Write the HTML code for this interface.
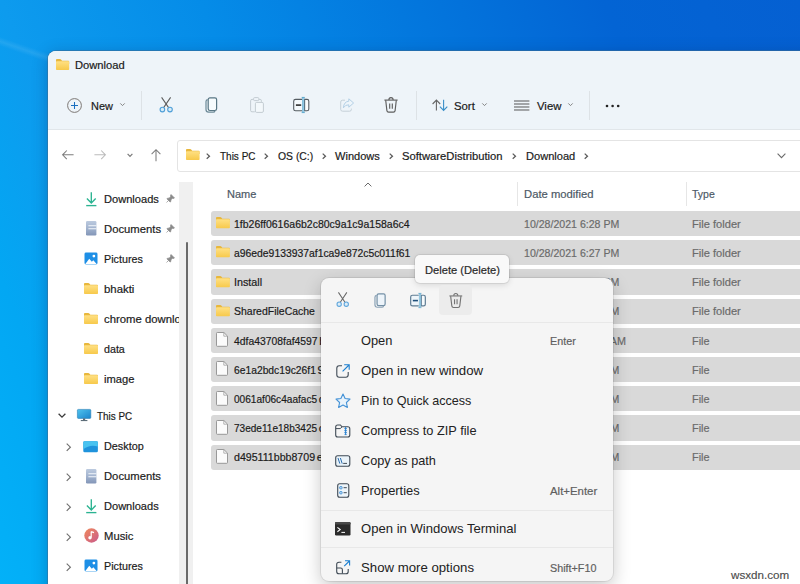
<!DOCTYPE html>
<html lang="en">
<head>
<meta charset="utf-8">
<title>Download - File Explorer</title>
<style>
*{box-sizing:border-box;margin:0;padding:0}
html,body{width:800px;height:584px;overflow:hidden}
body{position:relative;font-family:"Liberation Sans",sans-serif;font-size:11.5px;color:#1b1b1b;-webkit-text-stroke:0.2px currentColor;
 background:linear-gradient(68deg,#03b1f8 0%,#03a7f3 12%,#0d9bee 22.8%,#058ce8 42%,#0378de 61%,#0364d4 81%,#0560d2 100%);
}
.t{position:absolute;white-space:nowrap;line-height:16px;height:16px;transform-origin:0 50%}
#win{position:absolute;left:48px;top:51px;width:800px;height:600px;background:#fff;border-top-left-radius:8px;
 box-shadow:0 0 0 1px rgba(60,110,150,0.55),0 3px 16px rgba(0,30,80,0.30);overflow:hidden}
#chrome{position:absolute;left:0;top:0;width:800px;height:79px;background:#eef4f9;border-bottom:1px solid #e1e6ea}
.vsep{position:absolute;width:1px;background:#dde2e6}
svg{position:absolute;overflow:visible}
.row{position:absolute;left:211px;width:700px;height:25.3px;background:#d9d9d9;border-radius:3px}
.g{color:#6b6b6b}
#menu{position:absolute;left:320.5px;top:278px;width:292.5px;height:302.5px;background:#f5f5f5;border-radius:8px;
 box-shadow:0 0 0 1px rgba(0,0,0,0.07),0 6px 18px rgba(0,0,0,0.22)}
#tip{position:absolute;left:415px;top:255px;width:94px;height:28px;background:#f9f9f9;border-radius:5px;
 box-shadow:0 0 0 1px rgba(0,0,0,0.07),0 2px 6px rgba(0,0,0,0.12)}
.msep{position:absolute;left:321px;width:292px;height:1px;background:#e8e8e8}
.mi{font-size:13px;color:#222;-webkit-text-stroke:0}
.sc{font-size:11.4px;color:#5f5f5f}
.sb{font-size:11.5px}
</style>
</head>
<body>
<svg width="0" height="0" style="position:absolute">
 <defs>
  <linearGradient id="fg" x1="0" y1="0" x2="0" y2="1"><stop offset="0" stop-color="#ffe083"/><stop offset="1" stop-color="#f7c94b"/></linearGradient>
  <symbol id="folder" viewBox="0 0 14 11" preserveAspectRatio="none" overflow="visible">
   <path d="M0 0.9 Q0 0 0.9 0 H4.3 Q4.9 0 5.3 0.5 L6.4 1.8 H13.1 Q14 1.8 14 2.7 V5 H0 Z" fill="#e8b73c"/>
   <rect x="0" y="2.3" width="14" height="8.7" rx="0.8" fill="url(#fg)"/>
  </symbol>
  <symbol id="file" viewBox="0 0 12 14.8" preserveAspectRatio="none" overflow="visible">
   <path d="M1.3 0.5 H7.9 L11.5 4.1 V13.5 Q11.5 14.3 10.7 14.3 H1.3 Q0.5 14.3 0.5 13.5 V1.3 Q0.5 0.5 1.3 0.5 Z" fill="#fbfbfb" stroke="#8e8e8e" stroke-width="0.9"/>
   <path d="M7.8 0.7 V4.2 H11.3" fill="none" stroke="#a2a2a2" stroke-width="0.8"/>
  </symbol>
  <symbol id="chev" viewBox="0 0 6 8" overflow="visible"><path d="M1.2 0.8 L4.6 4 L1.2 7.2" fill="none" stroke="#555" stroke-width="1.3"/></symbol>
  <symbol id="chevd" viewBox="0 0 5 3" overflow="visible"><path d="M0.3 0.4 L2.5 2.6 L4.7 0.4" fill="none" stroke="#777" stroke-width="0.9"/></symbol>
  <symbol id="pin" viewBox="0 0 10 10" overflow="visible"><path d="M5.6 0.6 L9.4 4.4 L8.4 5 L7 4.8 L5.4 6.6 L5.4 8.2 L4.6 9 L1 5.4 L1.8 4.6 L3.4 4.6 L5.2 3 L5 1.6 Z M2.8 7.2 L0.6 9.4" fill="#8a8a8a" stroke="#8a8a8a" stroke-width="0.8"/></symbol>
  <linearGradient id="dg" x1="0" y1="0" x2="0" y2="1"><stop offset="0" stop-color="#bccadf"/><stop offset="0.5" stop-color="#a3b4cf"/><stop offset="1" stop-color="#8396b8"/></linearGradient>
  <symbol id="dl" viewBox="0 0 11 14.5" overflow="visible"><path d="M5.3 0.2 V10.4 M0.9 6.6 L5.3 11 L9.7 6.6" fill="none" stroke="#2bb391" stroke-width="1.35"/><path d="M0.2 13.6 H10.4" stroke="#2bb391" stroke-width="1.35"/></symbol>
  <symbol id="doc" viewBox="0 0 10.4 14.4" overflow="visible"><rect x="0" y="0" width="10.4" height="14.4" rx="1.2" fill="url(#dg)"/><path d="M2.4 4.8 H10.4 M2.4 7.8 H10.4" stroke="#f4f7fb" stroke-width="1.1"/></symbol>
  <symbol id="pic" viewBox="0 0 15 14" overflow="visible"><rect x="0.5" y="0.5" width="14" height="13" rx="1.6" fill="#1e8fe6"/><path d="M1.2 13.2 L5.6 7.2 L8.4 10.6 L10 9 L13.8 13.2 Z" fill="#fff"/><circle cx="10.6" cy="4.4" r="1.5" fill="#fff"/></symbol>
 </defs>
</svg>
<div style="position:absolute;left:-20px;top:30px;width:90px;height:9px;transform:rotate(19deg);transform-origin:0 50%;background:linear-gradient(180deg,rgba(255,255,255,0),rgba(255,255,255,0.09),rgba(255,255,255,0))"></div>
<div id="win"><div id="chrome"></div></div>

<svg style="left:56px;top:59.1px" width="13.2" height="11" ><use href="#folder" width="13.2" height="11"/></svg>
<div class="t " style="left:74.8px;top:56.9px;transform:scaleX(0.9715);">Download</div>
<svg style="left:66px;top:97px" width="17" height="17" viewBox="0 0 17 17"><circle cx="8.5" cy="8.5" r="6.9" fill="none" stroke="#7d7875" stroke-width="1"/><path d="M8.5 5 V12 M5 8.5 H12" stroke="#1a6fc0" stroke-width="1.05"/></svg>
<div class="t " style="left:90.7px;top:97.8px;transform:scaleX(0.9515);">New</div>
<svg style="left:119.6px;top:103.4px" width="5" height="3" ><use href="#chevd" width="5" height="3"/></svg>
<div class="vsep" style="left:141px;top:91px;height:29px"></div>
<svg style="left:159px;top:97px" width="15" height="15.5" viewBox="0 0 15 15.5"><path d="M2.6 0.4 L9.6 10.6 M11.6 0.4 L4.6 10.6" fill="none" stroke="#5c5c5c" stroke-width="1.05"/><circle cx="3.4" cy="12.6" r="2.3" fill="#d8ecf8" stroke="#4f9fd8" stroke-width="1.1"/><circle cx="11" cy="12.6" r="2.3" fill="#d8ecf8" stroke="#4f9fd8" stroke-width="1.1"/></svg>
<svg style="left:205px;top:96.7px" width="12.5" height="16" viewBox="0 0 12.5 16"><path d="M2.6 2.6 Q1 2.8 1 4.6 V12.6 Q1 15.2 3.6 15.2 H8.2 Q9.6 15.2 10 14" fill="none" stroke="#6d8a98" stroke-width="1.2"/><rect x="3.2" y="0.9" width="8.4" height="12.6" rx="1.7" fill="#f6fbfd" stroke="#587684" stroke-width="1.2"/></svg>
<svg style="left:249.5px;top:96.7px" width="14" height="16" viewBox="0 0 14 16"><path d="M3.6 2.4 H2 Q0.6 2.4 0.6 3.8 V13.4 Q0.6 14.8 2 14.8 H4.8" fill="none" stroke="#c3ccd2" stroke-width="1"/><path d="M8.8 2.4 H10.2 Q11.4 2.4 11.4 3.8 V4.8" fill="none" stroke="#c3ccd2" stroke-width="1"/><rect x="3.6" y="0.6" width="5.2" height="3" rx="1" fill="none" stroke="#c3ccd2" stroke-width="1"/><rect x="5.4" y="5.4" width="8" height="10" rx="1.3" fill="#f3f8fb" stroke="#c3ccd2" stroke-width="1"/></svg>
<svg style="left:293.3px;top:96.7px" width="16.5" height="16" viewBox="0 0 16.5 16"><path d="M9 2.4 H2.6 Q0.7 2.4 0.7 4.2 V12 Q0.7 13.8 2.6 13.8 H9" fill="#f4f9fc" stroke="#555c62" stroke-width="1.1"/><path d="M11.6 2.4 H14 Q15.8 2.4 15.8 4.2 V12 Q15.8 13.8 14 13.8 H11.6 Z" fill="#fbfdfe" stroke="#555c62" stroke-width="1.1"/><path d="M2.9 8.1 H8.2" stroke="#2b2b2b" stroke-width="1.6"/><rect x="9.5" y="0.4" width="1.5" height="15.2" fill="#a9d9ee" stroke="#5aa6cc" stroke-width="0.6"/><path d="M8.6 0.4 H11.9 M8.6 15.6 H11.9" stroke="#5aa6cc" stroke-width="0.8" fill="none"/></svg>
<svg style="left:340px;top:98px" width="14.5" height="14" viewBox="0 0 14.5 14"><path d="M5 2.2 H2.6 Q0.7 2.2 0.7 4 V11.4 Q0.7 13.2 2.6 13.2 H9.6 Q11.4 13.2 11.4 11.4 V10.6" fill="none" stroke="#c5d0d8" stroke-width="1"/><path d="M8.8 0.8 L13.6 5 L8.8 9.2 V6.8 Q5.4 6.6 3.4 9.8 Q3.8 3.8 8.8 3.2 Z" fill="#eef5fa" stroke="#b4d0e6" stroke-width="1" stroke-linejoin="round"/></svg>
<svg style="left:384.4px;top:96.8px" width="14" height="15.8" viewBox="0 0 14 15.8"><path d="M0.4 3.1 H13.6" stroke="#5e5e5e" stroke-width="1.15"/><path d="M4.9 2.9 Q4.9 0.6 7 0.6 Q9.1 0.6 9.1 2.9" fill="none" stroke="#5e5e5e" stroke-width="1.1"/><path d="M1.7 3.3 L2.9 13.6 Q3.1 15.2 4.6 15.2 H9.4 Q10.9 15.2 11.1 13.6 L12.3 3.3" fill="none" stroke="#5e5e5e" stroke-width="1.15"/><path d="M5.7 6.6 V11.8 M8.3 6.6 V11.8" stroke="#5e5e5e" stroke-width="1.15"/></svg>
<div class="vsep" style="left:416px;top:91px;height:29px"></div>
<svg style="left:431.6px;top:98.8px" width="16" height="12.4" viewBox="0 0 16 12.4"><path d="M4.4 11.4 V1.2 M0.6 5 L4.4 1.1 L8.2 5" fill="none" stroke="#666" stroke-width="1.1"/><path d="M11.6 0.8 V11.4 M7.9 7.6 L11.6 11.5 L15.3 7.6" fill="none" stroke="#3a8fc8" stroke-width="1.1"/></svg>
<div class="t " style="left:454.4px;top:97.8px;transform:scaleX(0.9861);">Sort</div>
<svg style="left:482.2px;top:103.4px" width="5" height="3" ><use href="#chevd" width="5" height="3"/></svg>
<svg style="left:514.3px;top:99.5px" width="15.4" height="11" viewBox="0 0 15.4 11"><path d="M0 1 H15.4 M0 4 H15.4 M0 7 H15.4 M0 10 H15.4" stroke="#555" stroke-width="1"/></svg>
<div class="t " style="left:537.4px;top:97.8px;transform:scaleX(0.9871);">View</div>
<svg style="left:567.5px;top:103.4px" width="5" height="3" ><use href="#chevd" width="5" height="3"/></svg>
<div class="vsep" style="left:589px;top:91px;height:29px"></div>
<svg style="left:605px;top:103.5px" width="15.2" height="4" viewBox="0 0 15.2 4"><circle cx="2" cy="2" r="1.3" fill="#222"/><circle cx="7.6" cy="2" r="1.3" fill="#222"/><circle cx="13.2" cy="2" r="1.3" fill="#222"/></svg>
<svg style="left:61.6px;top:150.3px" width="12" height="9.6" viewBox="0 0 12 9.6"><path d="M11.6 4.8 H0.8 M4.8 0.5 L0.6 4.8 L4.8 9.1" fill="none" stroke="#7d7d7d" stroke-width="1.05"/></svg>
<svg style="left:94.4px;top:150.3px" width="12" height="9.6" viewBox="0 0 12 9.6"><path d="M0.4 4.8 H11.2 M7.2 0.5 L11.4 4.8 L7.2 9.1" fill="none" stroke="#bcbcbc" stroke-width="1.05"/></svg>
<svg style="left:127px;top:153px" width="6" height="4.5" viewBox="0 0 6 4.5"><path d="M0.6 0.8 L3 3.4 L5.4 0.8" fill="none" stroke="#7a7a7a" stroke-width="1.2"/></svg>
<svg style="left:151.2px;top:149.2px" width="10" height="12.4" viewBox="0 0 10 12.4"><path d="M5 12.2 V0.8 M0.6 5.2 L5 0.7 L9.4 5.2" fill="none" stroke="#7d7d7d" stroke-width="1.05"/></svg>
<div style="position:absolute;left:176.5px;top:140px;width:640px;height:32px;border:1px solid #e4e4e4;border-radius:3px;background:#fff"></div>
<svg style="left:185.8px;top:149.3px" width="13.6" height="11" ><use href="#folder" width="13.6" height="11"/></svg>
<svg style="left:206.3px;top:153.0px" width="4.4" height="6.4" viewBox="0 0 4.4 6.4"><path d="M0.7 0.6 L3.5 3.2 L0.7 5.8" fill="none" stroke="#5a5a5a" stroke-width="1.25"/></svg>
<svg style="left:264.3px;top:153.0px" width="4.4" height="6.4" viewBox="0 0 4.4 6.4"><path d="M0.7 0.6 L3.5 3.2 L0.7 5.8" fill="none" stroke="#5a5a5a" stroke-width="1.25"/></svg>
<svg style="left:322px;top:153.0px" width="4.4" height="6.4" viewBox="0 0 4.4 6.4"><path d="M0.7 0.6 L3.5 3.2 L0.7 5.8" fill="none" stroke="#5a5a5a" stroke-width="1.25"/></svg>
<svg style="left:389px;top:153.0px" width="4.4" height="6.4" viewBox="0 0 4.4 6.4"><path d="M0.7 0.6 L3.5 3.2 L0.7 5.8" fill="none" stroke="#5a5a5a" stroke-width="1.25"/></svg>
<svg style="left:511.70000000000005px;top:153.0px" width="4.4" height="6.4" viewBox="0 0 4.4 6.4"><path d="M0.7 0.6 L3.5 3.2 L0.7 5.8" fill="none" stroke="#5a5a5a" stroke-width="1.25"/></svg>
<svg style="left:583.8px;top:153.0px" width="4.4" height="6.4" viewBox="0 0 4.4 6.4"><path d="M0.7 0.6 L3.5 3.2 L0.7 5.8" fill="none" stroke="#5a5a5a" stroke-width="1.25"/></svg>
<div class="t " style="left:220.3px;top:147.8px;transform:scaleX(0.8678);">This PC</div>
<div class="t " style="left:277.8px;top:147.8px;transform:scaleX(0.9029);">OS (C:)</div>
<div class="t " style="left:334.5px;top:147.8px;transform:scaleX(0.9624);">Windows</div>
<div class="t " style="left:402.4px;top:147.8px;transform:scaleX(0.9766);">SoftwareDistribution</div>
<div class="t " style="left:525.8px;top:147.8px;transform:scaleX(0.9637);">Download</div>
<svg style="left:776.5px;top:152.5px" width="9" height="5.5" viewBox="0 0 9 5.5"><path d="M0.6 0.7 L4.5 4.6 L8.4 0.7" fill="none" stroke="#6a6a6a" stroke-width="1.1"/></svg>
<div style="position:absolute;left:179px;top:182px;width:14px;height:410px;background:#f0f0f0"></div>
<div style="position:absolute;left:186px;top:242px;width:2px;height:350px;background:#6a6a6a;border-radius:1px"></div>
<div style="position:absolute;left:48px;top:182px;width:131.5px;height:410px;overflow:hidden">
</div>
<svg style="left:85.5px;top:191.6px" width="11" height="14.5" ><use href="#dl" width="11" height="14.5"/></svg>
<div class="t sb" style="left:103.6px;top:190.9px;transform:scaleX(0.9647);">Downloads</div>
<svg style="left:166px;top:194.0px" width="9" height="9" ><use href="#pin" width="9" height="9"/></svg>
<svg style="left:85.6px;top:221.3px" width="10.4" height="14.4" ><use href="#doc" width="10.4" height="14.4"/></svg>
<div class="t sb" style="left:103.6px;top:220.9px;transform:scaleX(0.9816);">Documents</div>
<svg style="left:166px;top:224.0px" width="9" height="9" ><use href="#pin" width="9" height="9"/></svg>
<svg style="left:84px;top:251.89999999999998px" width="14" height="13" ><use href="#pic" width="14" height="13"/></svg>
<div class="t sb" style="left:103.6px;top:250.8px;transform:scaleX(0.9339);">Pictures</div>
<svg style="left:166px;top:253.89999999999998px" width="9" height="9" ><use href="#pin" width="9" height="9"/></svg>
<svg style="left:84px;top:283.0px" width="14" height="11" ><use href="#folder" width="14" height="11"/></svg>
<div class="t sb" style="left:103.6px;top:280.9px;transform:scaleX(0.9906);">bhakti</div>
<svg style="left:84px;top:313.1px" width="14" height="11" ><use href="#folder" width="14" height="11"/></svg>
<div style="position:absolute;left:103.6px;top:310.6px;width:75px;height:16px;overflow:hidden">
<div class="t sb" style="left:0px;top:0.4px;transform:scaleX(0.9841);">chrome downloads</div>
</div>
<svg style="left:84px;top:343.1px" width="14" height="11" ><use href="#folder" width="14" height="11"/></svg>
<div class="t sb" style="left:103.6px;top:341.0px;transform:scaleX(0.9290);">data</div>
<svg style="left:84px;top:373.1px" width="14" height="11" ><use href="#folder" width="14" height="11"/></svg>
<div class="t sb" style="left:103.6px;top:371.0px;transform:scaleX(0.9704);">image</div>
<svg style="left:58px;top:413.4px" width="8" height="5.2" viewBox="0 0 8 5.2"><path d="M0.6 0.7 L4 4.1 L7.4 0.7" fill="none" stroke="#3c3c3c" stroke-width="1.3"/></svg>
<svg style="left:76.6px;top:409.4px" width="14.2" height="12.6" viewBox="0 0 14.2 12.6"><defs><linearGradient id="mon" x1="0" y1="0" x2="1" y2="1"><stop offset="0" stop-color="#4fc3ee"/><stop offset="1" stop-color="#1a84cc"/></linearGradient></defs><rect x="0.4" y="0.4" width="13.4" height="9" rx="0.9" fill="url(#mon)" stroke="#2a7fb5" stroke-width="0.6"/><rect x="6" y="9.4" width="2.2" height="1.8" fill="#5d6d79"/><rect x="3.8" y="11" width="6.6" height="1.1" fill="#5d6d79"/></svg>
<div class="t sb" style="left:96.8px;top:407.9px;transform:scaleX(0.8605);">This PC</div>
<svg style="left:66.4px;top:442.7px" width="5.4" height="8.4" viewBox="0 0 5.4 8.4"><path d="M0.7 0.6 L4.4 4.2 L0.7 7.8" fill="none" stroke="#6f6f6f" stroke-width="1.15"/></svg>
<svg style="left:83.3px;top:440.5px" width="15.2" height="11.6" viewBox="0 0 15 12.5" preserveAspectRatio="none"><rect x="0.3" y="0.3" width="14.4" height="11.9" rx="1.3" fill="#1f93dc"/><path d="M0.3 1.6 Q0.3 0.3 1.6 0.3 H13.4 Q14.7 0.3 14.7 1.6 V6 Q7 3 0.3 9 Z" fill="#49c3f0"/></svg>
<div class="t sb" style="left:103.6px;top:438.3px;transform:scaleX(0.9434);">Desktop</div>
<svg style="left:66.4px;top:472.7px" width="5.4" height="8.4" viewBox="0 0 5.4 8.4"><path d="M0.7 0.6 L4.4 4.2 L0.7 7.8" fill="none" stroke="#6f6f6f" stroke-width="1.15"/></svg>
<svg style="left:85.6px;top:468.7px" width="10.4" height="14.4" ><use href="#doc" width="10.4" height="14.4"/></svg>
<div class="t sb" style="left:103.6px;top:468.3px;transform:scaleX(0.9781);">Documents</div>
<svg style="left:66.4px;top:502.7px" width="5.4" height="8.4" viewBox="0 0 5.4 8.4"><path d="M0.7 0.6 L4.4 4.2 L0.7 7.8" fill="none" stroke="#6f6f6f" stroke-width="1.15"/></svg>
<svg style="left:85.5px;top:499.0px" width="11" height="14.5" ><use href="#dl" width="11" height="14.5"/></svg>
<div class="t sb" style="left:103.6px;top:498.3px;transform:scaleX(0.9612);">Downloads</div>
<svg style="left:66.4px;top:532.6999999999999px" width="5.4" height="8.4" viewBox="0 0 5.4 8.4"><path d="M0.7 0.6 L4.4 4.2 L0.7 7.8" fill="none" stroke="#6f6f6f" stroke-width="1.15"/></svg>
<svg style="left:83.5px;top:528.4px" width="15" height="15" viewBox="0 0 15 15"><defs><linearGradient id="mg" x1="0" y1="0" x2="1" y2="1"><stop offset="0" stop-color="#f08a5b"/><stop offset="1" stop-color="#c95a8c"/></linearGradient></defs><circle cx="7.5" cy="7.5" r="7.2" fill="url(#mg)"/><path d="M7.2 3.4 V9.6 M7.2 3.6 L10 4.6" stroke="#fff" stroke-width="1.2" fill="none"/><circle cx="6" cy="9.8" r="1.7" fill="#fff"/></svg>
<div class="t sb" style="left:103.6px;top:528.3px;transform:scaleX(0.9790);">Music</div>
<svg style="left:66.4px;top:562.6999999999999px" width="5.4" height="8.4" viewBox="0 0 5.4 8.4"><path d="M0.7 0.6 L4.4 4.2 L0.7 7.8" fill="none" stroke="#6f6f6f" stroke-width="1.15"/></svg>
<svg style="left:84px;top:559.4px" width="14" height="13" ><use href="#pic" width="14" height="13"/></svg>
<div class="t sb" style="left:103.6px;top:558.3px;transform:scaleX(0.9339);">Pictures</div>
<div class="vsep" style="left:517px;top:182px;height:24px;background:#e6e6e6"></div>
<div class="vsep" style="left:686px;top:182px;height:24px;background:#e6e6e6"></div>
<svg style="left:364px;top:181.5px" width="8" height="5" viewBox="0 0 8 5"><path d="M0.6 4.4 L4 1 L7.4 4.4" fill="none" stroke="#6a6a6a" stroke-width="1"/></svg>
<div class="t " style="left:227px;top:186.4px;transform:scaleX(0.9580);color:#4d5966">Name</div>
<div class="t " style="left:523.5px;top:186.4px;transform:scaleX(0.9793);color:#4d5966">Date modified</div>
<div class="t " style="left:692px;top:186.4px;transform:scaleX(0.9143);color:#4d5966">Type</div>
<div class="row" style="top:211.0px"></div>
<svg style="left:215.6px;top:217.10000000000002px" width="13.9" height="11.3" ><use href="#folder" width="13.9" height="11.3"/></svg>
<div class="t " style="left:234.4px;top:215.7px;transform:scaleX(0.9132);">1fb26ff0616a6b2c80c9a1c9a158a6c4</div>
<div class="t g" style="left:523.6px;top:215.7px;transform:scaleX(0.9199);">10/28/2021 6:28 PM</div>
<div class="t g" style="left:692px;top:215.7px;transform:scaleX(0.9663);">File folder</div>
<div class="row" style="top:240.2px"></div>
<svg style="left:215.6px;top:246.3px" width="13.9" height="11.3" ><use href="#folder" width="13.9" height="11.3"/></svg>
<div class="t " style="left:234.4px;top:244.9px;transform:scaleX(0.9019);">a96ede9133937af1ca9e872c5c011f61</div>
<div class="t g" style="left:523.6px;top:244.9px;transform:scaleX(0.9199);">10/28/2021 6:27 PM</div>
<div class="t g" style="left:692px;top:244.9px;transform:scaleX(0.9663);">File folder</div>
<div class="row" style="top:269.4px"></div>
<svg style="left:215.6px;top:275.5px" width="13.9" height="11.3" ><use href="#folder" width="13.9" height="11.3"/></svg>
<div class="t " style="left:234.4px;top:274.1px;transform:scaleX(0.9352);">Install</div>
<div class="t g" style="left:523.6px;top:274.1px;transform:scaleX(0.9199);">10/28/2021 6:27 PM</div>
<div class="t g" style="left:692px;top:274.1px;transform:scaleX(0.9663);">File folder</div>
<div class="row" style="top:298.6px"></div>
<svg style="left:215.6px;top:304.70000000000005px" width="13.9" height="11.3" ><use href="#folder" width="13.9" height="11.3"/></svg>
<div class="t " style="left:234.4px;top:303.3px;transform:scaleX(0.9104);">SharedFileCache</div>
<div class="t g" style="left:523.6px;top:303.3px;transform:scaleX(0.9199);">10/28/2021 6:27 PM</div>
<div class="t g" style="left:692px;top:303.3px;transform:scaleX(0.9663);">File folder</div>
<div class="row" style="top:327.8px"></div>
<svg style="left:216px;top:332.20000000000005px" width="12" height="14.8" ><use href="#file" width="12" height="14.8"/></svg>
<div class="t " style="left:234.4px;top:332.5px;transform:scaleX(0.9015);">4dfa43708faf4597</div>
<div class="t " style="left:319.2px;top:332.5px;">b0c0a1c3e5d2f8a1</div>
<div class="t g" style="left:523.6px;top:332.5px;transform:scaleX(0.9392);">10/29/2021 11:07 AM</div>
<div class="t g" style="left:692px;top:332.5px;transform:scaleX(0.9444);">File</div>
<div class="row" style="top:357.0px"></div>
<svg style="left:216px;top:361.40000000000003px" width="12" height="14.8" ><use href="#file" width="12" height="14.8"/></svg>
<div class="t " style="left:234.4px;top:361.7px;transform:scaleX(0.8955);">6e1a2bdc19c26f1</div>
<div class="t " style="left:317.5px;top:361.7px;">9a0d3b7c4e8f5a2b6</div>
<div class="t g" style="left:523.6px;top:361.7px;transform:scaleX(0.9199);">10/28/2021 6:27 PM</div>
<div class="t g" style="left:692px;top:361.7px;transform:scaleX(0.9444);">File</div>
<div class="row" style="top:386.2px"></div>
<svg style="left:216px;top:390.6px" width="12" height="14.8" ><use href="#file" width="12" height="14.8"/></svg>
<div class="t " style="left:234.4px;top:390.9px;transform:scaleX(0.8781);">0061af06c4aafac5</div>
<div class="t " style="left:318.7px;top:390.9px;">d8e2b1f7a3c9d4e0</div>
<div class="t g" style="left:523.6px;top:390.9px;transform:scaleX(0.9199);">10/28/2021 6:27 PM</div>
<div class="t g" style="left:692px;top:390.9px;transform:scaleX(0.9444);">File</div>
<div class="row" style="top:415.4px"></div>
<svg style="left:216px;top:419.8px" width="12" height="14.8" ><use href="#file" width="12" height="14.8"/></svg>
<div class="t " style="left:234.4px;top:420.1px;transform:scaleX(0.8739);">73ede11e18b3425</div>
<div class="t " style="left:318.7px;top:420.1px;">c9a7f0d6b2e8c1a5f</div>
<div class="t g" style="left:523.6px;top:420.1px;transform:scaleX(0.9199);">10/28/2021 6:27 PM</div>
<div class="t g" style="left:692px;top:420.1px;transform:scaleX(0.9444);">File</div>
<div class="row" style="top:444.6px"></div>
<svg style="left:216px;top:449.00000000000006px" width="12" height="14.8" ><use href="#file" width="12" height="14.8"/></svg>
<div class="t " style="left:234.4px;top:449.3px;transform:scaleX(0.9232);">d495111bbb8709</div>
<div class="t " style="left:316.7px;top:449.3px;">e4a2c6f1d3b7e9a0c8</div>
<div class="t g" style="left:523.6px;top:449.3px;transform:scaleX(0.9199);">10/28/2021 6:27 PM</div>
<div class="t g" style="left:692px;top:449.3px;transform:scaleX(0.9444);">File</div>
<div id="menu"></div>
<div id="tip"></div>
<div class="t " style="left:424.7px;top:261.6px;transform:scaleX(0.9684);color:#2a2a2a">Delete (Delete)</div>
<div style="position:absolute;left:439px;top:285px;width:33px;height:30px;background:#ececec;border-radius:4px"></div>
<svg style="left:335.8px;top:292.4px" width="14" height="15" viewBox="0 0 15 15.5" preserveAspectRatio="none"><path d="M2.6 0.4 L9.6 10.6 M11.6 0.4 L4.6 10.6" fill="none" stroke="#686868" stroke-width="1.1"/><circle cx="3.4" cy="12.6" r="2.3" fill="#dcecf7" stroke="#5fa6dc" stroke-width="1.15"/><circle cx="11" cy="12.6" r="2.3" fill="#dcecf7" stroke="#5fa6dc" stroke-width="1.15"/></svg>
<svg style="left:374px;top:292.6px" width="12" height="15" viewBox="0 0 12.5 16" preserveAspectRatio="none"><path d="M2.6 2.6 Q1 2.8 1 4.6 V12.6 Q1 15.2 3.6 15.2 H8.2 Q9.6 15.2 10 14" fill="none" stroke="#8aa2b6" stroke-width="1.25"/><rect x="3.2" y="0.9" width="8.4" height="12.6" rx="1.7" fill="#edf4fa" stroke="#7490a6" stroke-width="1.25"/></svg>
<svg style="left:409.8px;top:292.6px" width="16" height="15" viewBox="0 0 16.5 16" preserveAspectRatio="none"><path d="M9 2.4 H2.6 Q0.7 2.4 0.7 4.2 V12 Q0.7 13.8 2.6 13.8 H9" fill="#eef5fa" stroke="#5f7d94" stroke-width="1.25"/><path d="M11.6 2.4 H14 Q15.8 2.4 15.8 4.2 V12 Q15.8 13.8 14 13.8 H11.6 Z" fill="#f6fafc" stroke="#5f7d94" stroke-width="1.25"/><path d="M2.9 8.1 H8.2" stroke="#1f4f7a" stroke-width="1.7"/><rect x="9.5" y="0.4" width="1.5" height="15.2" fill="#b5dcee" stroke="#6aaed0" stroke-width="0.6"/><path d="M8.6 0.4 H11.9 M8.6 15.6 H11.9" stroke="#6aaed0" stroke-width="0.8" fill="none"/></svg>
<svg style="left:448.6px;top:292.8px" width="13.6" height="15" viewBox="0 0 14 15.8" preserveAspectRatio="none"><path d="M0.4 3.1 H13.6" stroke="#747474" stroke-width="1.15"/><path d="M4.9 2.9 Q4.9 0.6 7 0.6 Q9.1 0.6 9.1 2.9" fill="none" stroke="#747474" stroke-width="1.1"/><path d="M1.7 3.3 L2.9 13.6 Q3.1 15.2 4.6 15.2 H9.4 Q10.9 15.2 11.1 13.6 L12.3 3.3" fill="none" stroke="#747474" stroke-width="1.15"/><path d="M5.7 6.6 V11.8 M8.3 6.6 V11.8" stroke="#747474" stroke-width="1.15"/></svg>
<div class="msep" style="top:322px"></div>
<div class="msep" style="top:510px"></div>
<div class="msep" style="top:547px"></div>
<div class="t mi" style="left:360.9px;top:333.2px;transform:scaleX(0.9870);">Open</div>
<div class="t sc" style="left:550.4px;top:333.1px;transform:scaleX(0.9473);">Enter</div>
<div class="t mi" style="left:360.9px;top:363.2px;transform:scaleX(1.0178);">Open in new window</div>
<div class="t mi" style="left:360.9px;top:392.8px;transform:scaleX(0.9671);">Pin to Quick access</div>
<div class="t mi" style="left:360.9px;top:423.0px;transform:scaleX(0.9827);">Compress to ZIP file</div>
<div class="t mi" style="left:360.9px;top:453.2px;transform:scaleX(0.9777);">Copy as path</div>
<div class="t mi" style="left:360.9px;top:482.9px;transform:scaleX(0.9890);">Properties</div>
<div class="t sc" style="left:550.4px;top:482.8px;transform:scaleX(1.0006);">Alt+Enter</div>
<div class="t mi" style="left:360.9px;top:521.4px;transform:scaleX(1.0065);">Open in Windows Terminal</div>
<div class="t mi" style="left:360.9px;top:560.0px;transform:scaleX(1.0154);">Show more options</div>
<div class="t sc" style="left:550.4px;top:559.9px;transform:scaleX(0.9454);">Shift+F10</div>
<svg style="left:335.8px;top:363.5px" width="14" height="14" viewBox="0 0 14 14"><path d="M6 1.8 H3.2 Q0.8 1.8 0.8 4.2 V10.8 Q0.8 13.2 3.2 13.2 H9.8 Q12.2 13.2 12.2 10.8 V8" fill="none" stroke="#3f4a55" stroke-width="1.1"/><path d="M8.2 0.8 H13.2 V5.8 M13 1 L6.6 7.4" fill="none" stroke="#1c7fd0" stroke-width="1.1"/></svg>
<svg style="left:334.8px;top:392.5px" width="16" height="15.5" viewBox="0 0 16 15.5"><path d="M8 1 L10.1 5.5 L15 6.1 L11.4 9.5 L12.4 14.4 L8 12 L3.6 14.4 L4.6 9.5 L1 6.1 L5.9 5.5 Z" fill="#e9f3fb" stroke="#4492d6" stroke-width="1.1" stroke-linejoin="round"/></svg>
<svg style="left:335.3px;top:423.5px" width="15.5" height="14" viewBox="0 0 15.5 14"><path d="M0.7 3 Q0.7 1 2.7 1 H5.4 L7 2.8 H12.8 Q14.8 2.8 14.8 4.8 V11 Q14.8 13 12.8 13 H2.7 Q0.7 13 0.7 11 Z" fill="none" stroke="#3f4a55" stroke-width="1.1"/><path d="M0.9 4.6 H5.2 L7 2.9" fill="none" stroke="#3f4a55" stroke-width="1"/><path d="M10.6 3 V10.4 M9.4 4.6 H11.8 M9.4 6.6 H11.8 M9.4 8.6 H11.8 M9.6 10.6 H11.6" stroke="#2a84d2" stroke-width="1"/></svg>
<svg style="left:335.3px;top:454.5px" width="15.5" height="12" viewBox="0 0 15.5 12"><rect x="0.7" y="0.7" width="14.1" height="10.6" rx="2" fill="#eaf3f9" stroke="#3f4a55" stroke-width="1.1"/><path d="M3 3 L4.8 8.6 M5.4 3 L7.2 8.6" stroke="#2a6db0" stroke-width="1"/><path d="M8.2 8.4 H12" stroke="#3f4a55" stroke-width="1"/></svg>
<svg style="left:336.8px;top:483px" width="12.5" height="15" viewBox="0 0 12.5 15"><rect x="0.7" y="0.7" width="11.1" height="13.6" rx="2" fill="#eef5fa" stroke="#3f4a55" stroke-width="1.1"/><rect x="2.8" y="3.6" width="2.2" height="2.2" rx="0.4" fill="none" stroke="#2a84d2" stroke-width="0.9"/><rect x="2.8" y="8.6" width="2.2" height="2.2" rx="0.4" fill="none" stroke="#2a84d2" stroke-width="0.9"/><path d="M6.6 4.7 H9.8 M6.6 9.7 H9.8" stroke="#3f4a55" stroke-width="1"/></svg>
<svg style="left:335.3px;top:521.5px" width="15.5" height="13.5" viewBox="0 0 15.5 13.5"><rect x="0" y="0" width="15.5" height="13.5" rx="1.2" fill="#2b2b2b"/><rect x="0" y="0" width="15.5" height="2.6" rx="1.2" fill="#4a4a4a"/><path d="M2.4 5.4 L5.2 7.6 L2.4 9.8" fill="none" stroke="#fff" stroke-width="1.1"/><path d="M6.4 10.4 H10" stroke="#fff" stroke-width="1"/></svg>
<svg style="left:335.8px;top:560px" width="14.5" height="14.5" viewBox="0 0 14.5 14.5"><path d="M5.4 2.2 H3 Q0.7 2.2 0.7 4.4 V11.4 Q0.7 13.7 3 13.7 H10 Q12.2 13.7 12.2 11.4 V9" fill="none" stroke="#3f4a55" stroke-width="1.1"/><path d="M0.8 8 H4.6 Q6.4 8 6.4 9.8 V13.6" fill="none" stroke="#3f4a55" stroke-width="1.1"/><path d="M9 0.8 H13.6 V5.4 M13.4 1 L8.2 6.2" fill="none" stroke="#1c7fd0" stroke-width="1.1"/></svg>
<div class="t " style="left:731px;top:566.6px;transform:scaleX(0.9862);font-size:11.8px;color:#4c4c4c;-webkit-text-stroke:0.15px #4c4c4c">wsxdn.com</div>
</body>
</html>
